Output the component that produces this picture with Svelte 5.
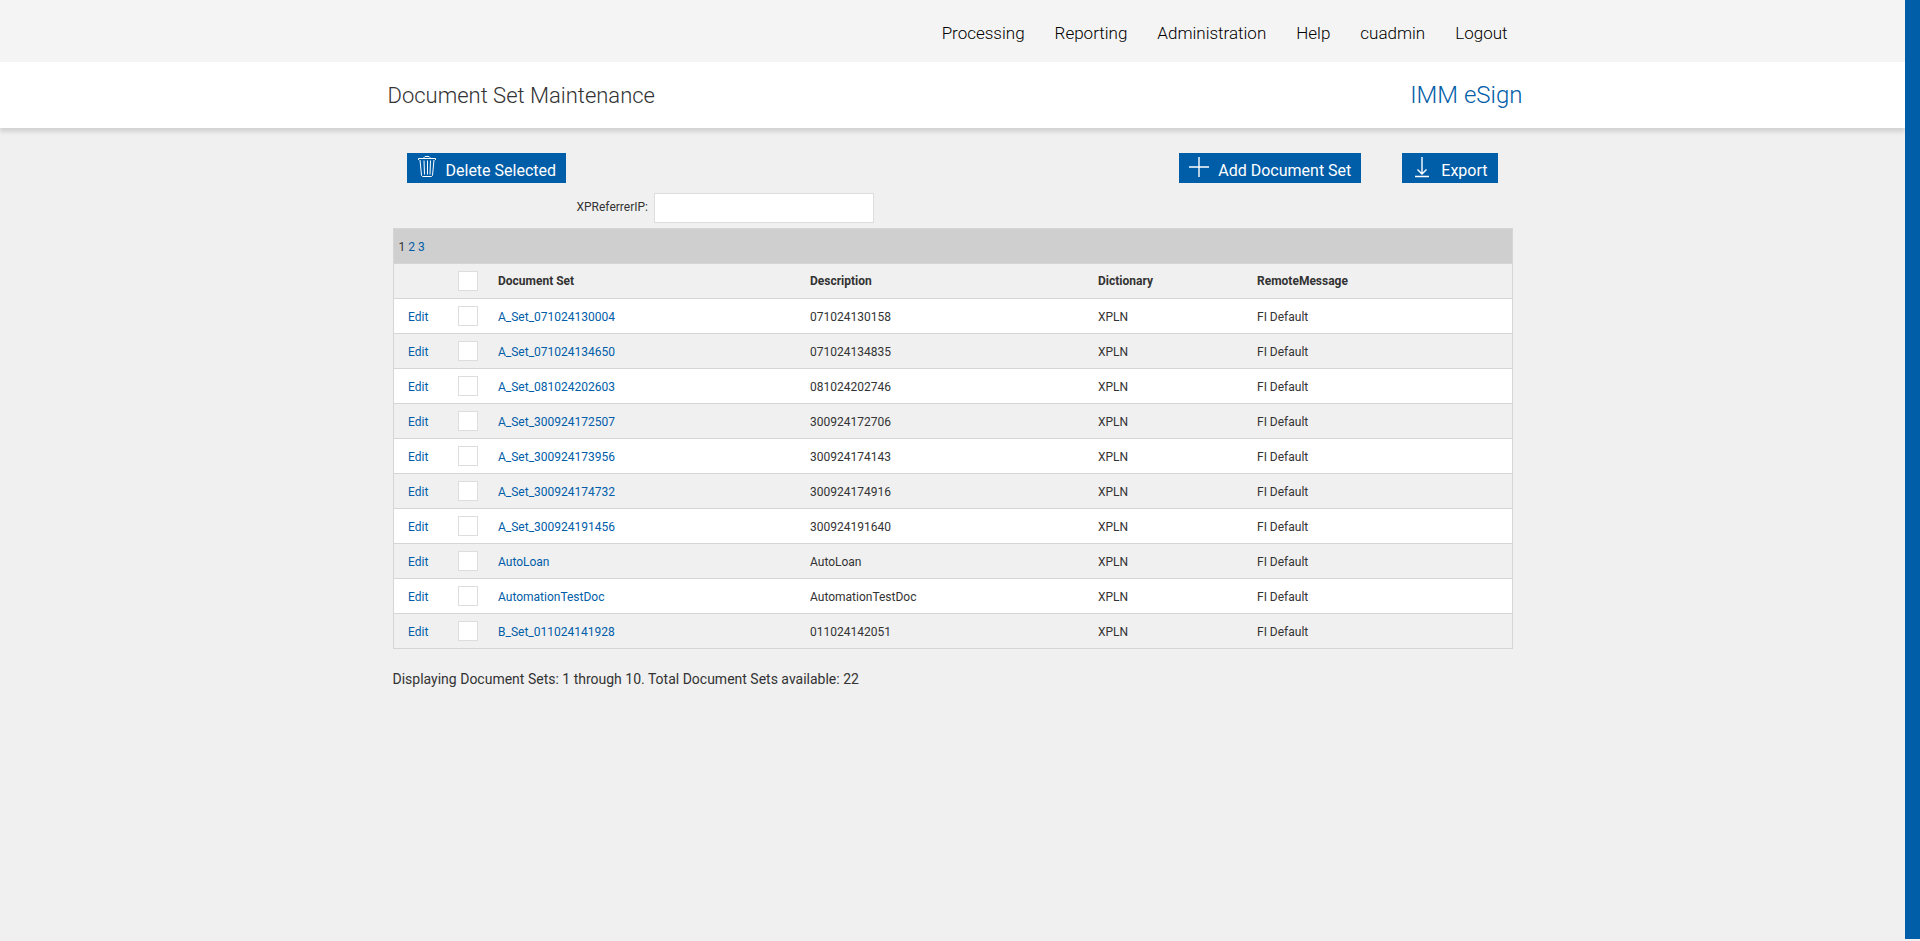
<script lang="ts">
	const menu = ['Processing', 'Reporting', 'Administration', 'Help', 'cuadmin', 'Logout'];

	const documentSets = [
		{ name: 'A_Set_071024130004', description: '071024130158' },
		{ name: 'A_Set_071024134650', description: '071024134835' },
		{ name: 'A_Set_081024202603', description: '081024202746' },
		{ name: 'A_Set_300924172507', description: '300924172706' },
		{ name: 'A_Set_300924173956', description: '300924174143' },
		{ name: 'A_Set_300924174732', description: '300924174916' },
		{ name: 'A_Set_300924191456', description: '300924191640' },
		{ name: 'AutoLoan', description: 'AutoLoan' },
		{ name: 'AutomationTestDoc', description: 'AutomationTestDoc' },
		{ name: 'B_Set_011024141928', description: '011024142051' }
	];

	let selected: string[] = $state([]);
	let referrer = $state('');

	function toggleAll(e: Event) {
		const checked = (e.currentTarget as HTMLInputElement).checked;
		selected = checked ? documentSets.map((d) => d.name) : [];
	}
</script>

<div class="shell">
	<div class="page">
		<nav class="top-nav">
			<ul class="inner menu">
				{#each menu as item}
					<li><a href="#{item.toLowerCase()}">{item}</a></li>
				{/each}
			</ul>
		</nav>

		<header class="title-bar">
			<div class="inner title-row">
				<h1>Document Set Maintenance</h1>
				<span class="product">IMM eSign</span>
			</div>
		</header>

		<main class="content">
			<div class="toolbar">
				<button type="button" class="btn">
					<svg width="20" height="22" viewBox="0 0 20 22" fill="none" stroke="currentColor" aria-hidden="true">
						<path d="M1.5 4V2.5H18.5V4M7 2.5V1.5L8 .5H12L13 1.5V2.5" />
						<path d="M3 4L4.5 19.5L5.5 20.5H14.5L15.5 19.5L17 4M7 4.5L7.5 18.5M10.5 4.5V18.5M13.5 4.5L13 18.5" />
					</svg>
					Delete Selected
				</button>
				<button type="button" class="btn push">
					<svg width="20" height="22" viewBox="0 0 20 22" fill="none" stroke="currentColor" aria-hidden="true">
						<path d="M10 1V21M0 11H20" stroke-width="1.4" />
					</svg>
					Add Document Set
				</button>
				<button type="button" class="btn">
					<svg width="20" height="22" viewBox="0 0 20 22" fill="none" stroke="currentColor" aria-hidden="true">
						<path d="M10 1V18M5.5 13.5L10 18L14.5 13.5M3 20.5H17" stroke-width="1.4" />
					</svg>
					Export
				</button>
			</div>

			<div class="filter">
				<label for="referrer">XPReferrerIP:</label>
				<input id="referrer" type="text" bind:value={referrer} />
			</div>

			<table class="grid">
				<colgroup>
					<col class="col-edit" />
					<col class="col-check" />
					<col class="col-name" />
					<col class="col-description" />
					<col class="col-dictionary" />
					<col />
				</colgroup>
				<thead>
					<tr class="pager">
						<td colspan="6"><span>1</span> <a href="#page2">2</a> <a href="#page3">3</a></td>
					</tr>
					<tr>
						<th></th>
						<th class="center">
							<input
								type="checkbox"
								aria-label="Select all"
								checked={selected.length === documentSets.length}
								onchange={toggleAll}
							/>
						</th>
						<th>Document Set</th>
						<th>Description</th>
						<th>Dictionary</th>
						<th>RemoteMessage</th>
					</tr>
				</thead>
				<tbody>
					{#each documentSets as set}
						<tr>
							<td class="center"><a href="#edit">Edit</a></td>
							<td class="center check">
								<input type="checkbox" aria-label="Select {set.name}" value={set.name} bind:group={selected} />
							</td>
							<td><a href="#{set.name}">{set.name}</a></td>
							<td>{set.description}</td>
							<td>XPLN</td>
							<td>FI Default</td>
						</tr>
					{/each}
				</tbody>
			</table>

			<p class="summary">Displaying Document Sets: 1 through 10. Total Document Sets available: 22</p>
		</main>
	</div>
	<div class="edge"></div>
</div>

<style>
	:global(body) {
		background: #f0f0f0;
	}

	.shell {
		display: flex;
		min-height: 100vh;
		font-family: Roboto, sans-serif;
		color: #333;
	}

	.page {
		flex: 1;
		min-width: 0;
	}

	.edge {
		width: 15px;
		margin-bottom: 2px;
		background: #005da8;
	}

	a {
		color: #005da8;
		text-decoration: none;
	}

	.inner {
		box-sizing: border-box;
		max-width: 1140px;
		margin: 0 auto;
	}

	.top-nav {
		background: #f4f4f4;
	}

	.menu {
		display: flex;
		justify-content: flex-end;
		align-items: center;
		gap: 30px;
		height: 62px;
		padding: 4px 15px 0;
		list-style: none;
		font-size: 17px;
		font-weight: 300;
	}

	.menu a {
		color: #000;
	}

	.title-bar {
		background: #fff;
		box-shadow: 0 4px 4px rgba(0, 0, 0, 0.12);
	}

	.title-row {
		display: flex;
		justify-content: space-between;
		align-items: center;
		height: 66px;
		padding-left: 5px;
	}

	h1 {
		margin: 0;
		font-size: 22px;
		font-weight: 300;
	}

	.product {
		color: #005da8;
		font-size: 24px;
		font-weight: 300;
	}

	.content {
		max-width: 1120px;
		margin: 0 auto;
		padding-top: 25px;
	}

	.toolbar {
		display: flex;
		gap: 41px;
		padding: 0 15px 0 14px;
	}

	.push {
		margin-left: auto;
	}

	.btn {
		display: flex;
		gap: 9px;
		height: 30px;
		padding: 3px 10px 0;
		border: 0;
		background: #005da8;
		color: #fff;
		font-family: inherit;
		font-size: 16px;
		line-height: 30px;
		cursor: pointer;
	}

	.filter {
		display: flex;
		gap: 6px;
		margin: 10px 0 5px;
		padding-left: 184px;
		font-size: 12px;
		line-height: 28px;
	}

	.filter input {
		box-sizing: border-box;
		width: 220px;
		height: 30px;
		padding: 0 5px;
		border: 1px solid #ddd;
		background: #fff;
	}

	.grid {
		width: 100%;
		table-layout: fixed;
		border-collapse: collapse;
		border: 1px solid #d5d5d5;
		font-size: 12px;
	}

	.grid tr {
		height: 35px;
		border-bottom: 1px solid #d5d5d5;
	}

	.grid tbody tr:nth-child(odd) {
		background: #fff;
	}

	.grid .pager {
		background: #cfcfcf;
	}

	.grid th,
	.grid td {
		padding: 0 5px;
		text-align: left;
	}

	.grid td {
		padding-top: 2px;
	}

	.grid .check {
		padding-top: 0;
	}

	.grid .center {
		text-align: center;
	}

	.col-edit,
	.col-check {
		width: 50px;
	}

	.col-name {
		width: 312px;
	}

	.col-description {
		width: 288px;
	}

	.col-dictionary {
		width: 159px;
	}

	input[type='checkbox'] {
		display: block;
		box-sizing: border-box;
		width: 20px;
		height: 20px;
		margin: 0 auto;
		appearance: none;
		border: 1px solid #ddd;
		background: #fff;
	}

	input[type='checkbox']:checked {
		background: #005da8;
	}

	.summary {
		margin: 20px 0;
		font-size: 14px;
		line-height: 20px;
	}
</style>
